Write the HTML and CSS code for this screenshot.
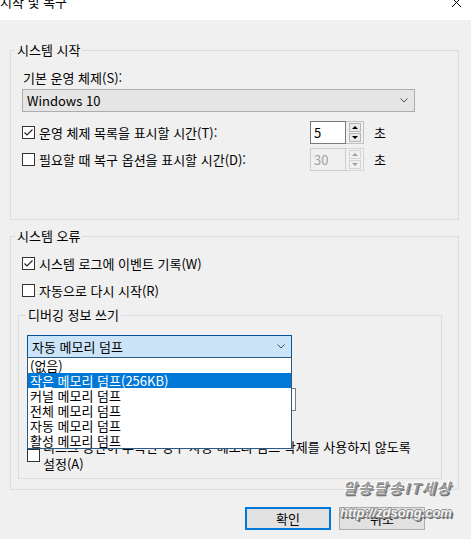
FILE: index.html
```html
<!DOCTYPE html>
<html lang="ko">
<head>
    <meta charset="UTF-8">
    <meta name="viewport" content="width=device-width, initial-scale=1.0">
    <title>시작 및 복구</title>
    <link rel="stylesheet" href="styles.css">
</head>
<body>
    <div class="dialog">
        <div class="titlebar">
            <span class="title">시작 및 복구</span>
            <svg class="close" width="11" height="11" viewBox="0 0 11 11"><path d="M1 1L10 10M10 1L1 10" stroke="#000" stroke-width="1" fill="none"/></svg>
        </div>

        <div class="content">
            <div class="group group-startup">
                <div class="legend"><span>시스템 시작</span></div>
                <div class="field-label">기본 운영 체제(S):</div>
                <div class="select">
                    <span>Windows 10</span>
                    <svg class="chevron" width="8" height="5" viewBox="0 0 8 5"><path d="M0.5 0.5L4 4L7.5 0.5" stroke="#505050" fill="none"/></svg>
                </div>

                <div class="row row-first">
                    <label class="check">
                        <svg class="box" width="13" height="13" viewBox="0 0 13 13"><rect x="0.5" y="0.5" width="12" height="12" fill="#fff" stroke="#333"/><path d="M2.5 6.5L5 9L10.5 3.5" stroke="#222" stroke-width="1.2" fill="none"/></svg>
                        운영 체제 목록을 표시할 시간(T):
                    </label>
                    <div class="spinner">
                        <div class="spin-input">5</div>
                        <div class="spin-buttons">
                            <span class="spin-btn up"></span>
                            <span class="spin-btn down"></span>
                        </div>
                    </div>
                    <span class="unit">초</span>
                </div>

                <div class="row">
                    <label class="check">
                        <svg class="box" width="13" height="13" viewBox="0 0 13 13"><rect x="0.5" y="0.5" width="12" height="12" fill="#fff" stroke="#333"/></svg>
                        필요할 때 복구 옵션을 표시할 시간(D):
                    </label>
                    <div class="spinner disabled">
                        <div class="spin-input">30</div>
                        <div class="spin-buttons">
                            <span class="spin-btn up"></span>
                            <span class="spin-btn down"></span>
                        </div>
                    </div>
                    <span class="unit">초</span>
                </div>
            </div>

            <div class="group group-errors">
                <div class="legend"><span>시스템 오류</span></div>
                <label class="check check-w">
                    <svg class="box" width="13" height="13" viewBox="0 0 13 13"><rect x="0.5" y="0.5" width="12" height="12" fill="#fff" stroke="#333"/><path d="M2.5 6.5L5 9L10.5 3.5" stroke="#222" stroke-width="1.2" fill="none"/></svg>
                    시스템 로그에 이벤트 기록(W)
                </label>
                <label class="check check-r">
                    <svg class="box" width="13" height="13" viewBox="0 0 13 13"><rect x="0.5" y="0.5" width="12" height="12" fill="#fff" stroke="#333"/></svg>
                    자동으로 다시 시작(R)
                </label>

                <div class="subgroup">
                    <div class="legend"><span>디버깅 정보 쓰기</span></div>
                    <div class="combo">
                        <div class="combo-head">
                            <span>자동 메모리 덤프</span>
                            <svg class="chevron" width="8" height="5" viewBox="0 0 8 5"><path d="M0.5 0.5L4 4L7.5 0.5" stroke="#505050" fill="none"/></svg>
                        </div>
                        <div class="combo-list">
                            <div>(없음)</div>
                            <div class="selected">작은 메모리 덤프(256KB)</div>
                            <div>커널 메모리 덤프</div>
                            <div>전체 메모리 덤프</div>
                            <div>자동 메모리 덤프</div>
                            <div>활성 메모리 덤프</div>
                        </div>
                    </div>
                    <div class="dump-label">덤프 파일:</div>
                    <div class="textbox">%SystemRoot%\MEMORY.DMP</div>
                    <label class="check check-o">
                        <svg class="box" width="13" height="13" viewBox="0 0 13 13"><rect x="0.5" y="0.5" width="12" height="12" fill="#fff" stroke="#333"/><path d="M2.5 6.5L5 9L10.5 3.5" stroke="#222" stroke-width="1.2" fill="none"/></svg>
                        기존 파일 덮어쓰기(O)
                    </label>
                    <label class="check check-a">
                        <svg class="box" width="13" height="13" viewBox="0 0 13 13"><rect x="0.5" y="0.5" width="12" height="12" fill="#fff" stroke="#333"/></svg>
                        <span class="wrap-text">디스크 공간이 부족한 경우 자동 메모리 덤프 삭제를 사용하지 않도록 설정(A)</span>
                    </label>
                </div>
            </div>

            <div class="buttons">
                <button class="btn btn-default">확인</button>
                <button class="btn">취소</button>
            </div>
        </div>

        <div class="watermark">
            <div class="wm-title">알송달송IT세상</div>
            <div class="wm-url">http://zdsong.com</div>
        </div>
    </div>
</body>
</html>
```

FILE: styles.css
```css
* {
    box-sizing: border-box;
}
body {
    margin: 0;
    font-family: "Noto Sans CJK KR", sans-serif;
    font-size: 13px;
    color: #000;
}
.dialog {
    position: relative;
    width: 471px;
    height: 539px;
    background: #f0f0f0;
    overflow: hidden;
}
.titlebar {
    height: 20px;
    background: #fff;
    display: flex;
    justify-content: space-between;
    align-items: flex-start;
    overflow: hidden;
}
.title {
    line-height: 15px;
    margin-top: -6px;
}
.close {
    margin: -3px 9px 0 0;
}
.content {
    padding: 30px 0 0 10px;
}
.group {
    width: 449px;
    border: 1px solid #dcdcdc;
    padding: 0 0 0 11px;
}
.group-startup {
    padding-bottom: 48px;
}
.group-errors {
    margin-top: 16px;
    padding-bottom: 10px;
}
.legend {
    height: 15px;
    line-height: 15px;
    margin: -9px 0 0 -7px;
}
.legend span {
    background: #f0f0f0;
    padding: 0 2px;
}
.field-label {
    margin-top: 13px;
    line-height: 15px;
    margin-left: 1px;
}
.select {
    margin-top: 4px;
    width: 393px;
    height: 23px;
    border: 1px solid #adadad;
    background: #e5e5e5;
    display: flex;
    align-items: center;
    justify-content: space-between;
    padding: 0 6px 0 4px;
}
.row {
    display: flex;
    align-items: center;
    height: 23px;
    margin-top: 4px;
}
.row-first {
    margin-top: 9px;
}
.check {
    display: flex;
    align-items: center;
    line-height: 17px;
}
.box {
    display: block;
    flex: none;
    margin-right: 4px;
}
.row .check {
    width: 288px;
}
.spinner {
    display: flex;
    width: 54px;
    height: 23px;
}
.spin-input {
    width: 36px;
    border: 1px solid #7a7a7a;
    background: #fff;
    padding-left: 3px;
    line-height: 21px;
}
.spin-buttons {
    width: 18px;
    border: 1px solid #c2c2c2;
    border-left: none;
    display: flex;
    flex-direction: column;
    justify-content: center;
    align-items: center;
    gap: 1px;
}
.spin-btn {
    width: 12px;
    height: 9px;
    border: 1px solid #b5b5b5;
    background: #e9e9e9;
    display: flex;
    align-items: center;
    justify-content: center;
}
.spin-btn::after {
    content: "";
    border-left: 3px solid transparent;
    border-right: 3px solid transparent;
}
.spin-btn.up::after {
    border-bottom: 3px solid #000;
}
.spin-btn.down::after {
    border-top: 3px solid #000;
}
.spinner.disabled .spin-input {
    border-color: #cccccc;
    background: #f0f0f0;
    color: #a0a0a0;
}
.spinner.disabled .spin-buttons {
    border-color: #d5d5d5;
}
.spinner.disabled .spin-btn {
    border-color: #d5d5d5;
    background: #f0f0f0;
}
.spinner.disabled .spin-btn.up::after {
    border-bottom-color: #a0a0a0;
}
.spinner.disabled .spin-btn.down::after {
    border-top-color: #a0a0a0;
}
.unit {
    margin-left: 10px;
}
.check-w {
    margin-top: 12px;
}
.check-r {
    margin-top: 10px;
}
.subgroup {
    margin: 16px 0 0 -4px;
    width: 424px;
    border: 1px solid #dcdcdc;
    padding: 0 0 6px 8px;
}
.subgroup .legend {
    margin-left: -1px;
}
.combo {
    position: relative;
    margin-top: 13px;
    width: 265px;
    height: 23px;
}
.combo-head {
    height: 23px;
    border: 1px solid #005499;
    background: #cce4f7;
    display: flex;
    align-items: center;
    justify-content: space-between;
    padding: 0 6px 0 4px;
}
.combo-list {
    position: absolute;
    left: 0;
    top: 22px;
    width: 265px;
    border: 1px solid #2b5b84;
    background: #fff;
    z-index: 2;
}
.combo-list div {
    height: 15px;
    line-height: 15px;
    padding-left: 2px;
}
.combo-list .selected {
    background: #0078d7;
    color: #fff;
}
.dump-label {
    margin-top: 8px;
    line-height: 15px;
}
.textbox {
    margin-top: 7px;
    width: 269px;
    height: 23px;
    border: 1px solid #7a7a7a;
    background: #fff;
    padding-left: 4px;
    line-height: 21px;
}
.check-o {
    margin-top: 8px;
}
.check-a {
    margin-top: 2px;
}
.check-a .box {
    margin-right: 3px;
}
.wrap-text {
    flex: none;
    width: 372px;
}
.buttons {
    margin-top: 17px;
    display: flex;
    justify-content: flex-end;
    gap: 8px;
    padding-right: 46px;
}
.btn {
    width: 86px;
    height: 23px;
    border: 1px solid #adadad;
    background: #e1e1e1;
    font: inherit;
    color: #000;
    padding: 0;
    line-height: 19px;
}
.btn-default {
    border: 2px solid #0078d7;
}
.watermark {
    position: absolute;
    left: 340px;
    top: 478px;
    font-weight: bold;
    font-style: italic;
    z-index: 3;
}
.wm-title {
    margin-left: 3px;
    font-family: "Noto Sans CJK KR", sans-serif;
    font-size: 15px;
    line-height: 20px;
    letter-spacing: 1.5px;
    color: #9a9a9a;
    text-shadow: -1px -1px 0 #fff, 1px 1px 0 #6a6a6a;
}
.wm-url {
    margin-top: 6px;
    font-family: "Liberation Sans", sans-serif;
    font-size: 13px;
    line-height: 18px;
    color: #f4f4f4;
    text-shadow: 1px 0 0 #8a8a8a, -1px 0 0 #8a8a8a, 0 1px 0 #8a8a8a, 0 -1px 0 #8a8a8a, 2px 2px 0 #666;
}
```
